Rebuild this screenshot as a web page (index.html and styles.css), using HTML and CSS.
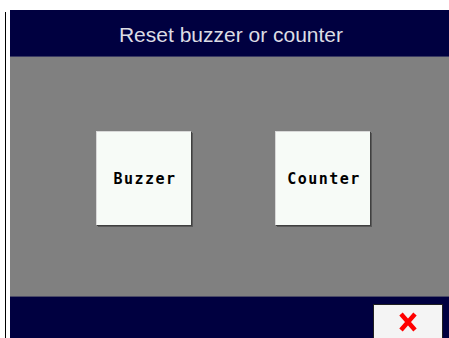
FILE: index.html
```html
<!DOCTYPE html>
<html lang="en">
<head>
  <meta charset="UTF-8" />
  <title>Reset buzzer or counter</title>
  <link rel="stylesheet" href="styles.css">
</head>
<body>
  <div class="edge"></div>
  <div class="panel">
    <div class="header">Reset buzzer or counter</div>
    <div class="content">
      <button class="choice">Buzzer</button>
      <button class="choice">Counter</button>
    </div>
    <div class="footer">
      <button class="close">
        <svg width="22" height="20" viewBox="0 0 22 20">
          <path d="M4 2 L18 18 M18 2 L4 18" stroke="#ff0000" stroke-width="4.5" />
        </svg>
      </button>
    </div>
  </div>
</body>
</html>
```

FILE: styles.css
```css
html, body {
  height: 100%;
  overflow: hidden;
}

body {
  margin: 0;
  background: #fff;
  display: flex;
  padding-top: 10px;
  box-sizing: border-box;
}

.edge {
  width: 1px;
  background: #000;
  margin: 2px 4px 0 5px;
}

.panel {
  flex: 1;
  display: flex;
  flex-direction: column;
  min-height: 0;
}

.header {
  flex-shrink: 0;
  height: 46px;
  background: #000040;
  border-bottom: 1px solid #3a3a62;
  color: #dcdce4;
  font-family: "Liberation Sans", Arial, sans-serif;
  font-size: 21px;
  text-align: center;
  line-height: 50px;
  padding-left: 3px;
}

.content {
  flex-shrink: 0;
  height: 240px;
  background: #808080;
  border-bottom: 1px solid #4a4a66;
  display: flex;
  align-items: flex-start;
  padding: 74px 0 0 86px;
  gap: 84px;
  box-sizing: border-box;
}

.choice {
  width: 95px;
  height: 94px;
  background: #f7fbf7;
  border: none;
  border-top: 1px solid #d8d8d8;
  border-left: 1px solid #d8d8d8;
  box-shadow: 1px 1px 0 #404040, 2px 2px 0 #5a5a5a;
  font-family: "DejaVu Sans Mono", monospace;
  font-weight: bold;
  font-size: 15px;
  letter-spacing: 1.5px;
  padding: 0 0 0 2px;
  color: #000;
}

.footer {
  flex: 1;
  min-height: 0;
  overflow: hidden;
  background: #000040;
  display: flex;
  justify-content: flex-end;
  align-items: flex-start;
  padding: 7px 6px 0 0;
}

.close {
  flex-shrink: 0;
  width: 70px;
  height: 50px;
  background: #f4f4f4;
  border: 1px solid #202020;
  padding: 0;
  display: flex;
  justify-content: center;
  align-items: flex-start;
  padding-top: 7px;
}
```
